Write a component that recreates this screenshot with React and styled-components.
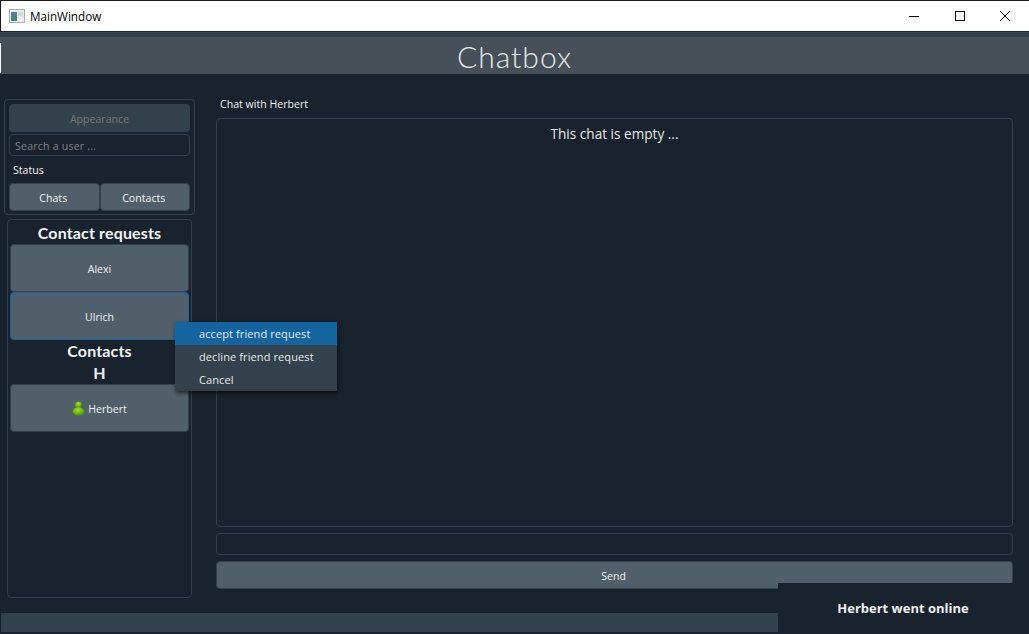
import React from "react";
import styled, { createGlobalStyle } from "styled-components";

const Global = createGlobalStyle`
  html, body { margin: 0; padding: 0; background: #19232d; }
  #root { width: 1029px; height: 634px; overflow: hidden; }
  * { box-sizing: border-box; }
`;

const Window = styled.div`
  position: relative;
  width: 1029px;
  height: 634px;
  display: flex;
  flex-direction: column;
  background: #19232d;
  color: #dfe1e2;
  font-family: "Open Sans", "Noto Sans", sans-serif;
  font-size: 10.6px;
  overflow: hidden;
`;

const TitleBar = styled.div`
  height: 32px;
  flex: none;
  display: flex;
  align-items: center;
  background: #fff;
  border-top: 1px solid #1a1a1a;
  border-left: 1px solid #1a1a1a;
  border-bottom: 1px solid #1a2129;
  color: #000;
  font-size: 11.7px;
  padding-left: 8px;
  padding-right: 1px;
`;

const AppTitle = styled.span`
  margin-left: 5px;
  flex: 1;
`;

const WinButton = styled.div`
  width: 45.5px;
  height: 30px;
  display: flex;
  align-items: center;
  justify-content: center;
`;

const MenuBand = styled.div`
  height: 5px;
  flex: none;
  background: #32414b;
`;

const Header = styled.div`
  position: relative;
  height: 37px;
  flex: none;
  display: flex;
  align-items: center;
  justify-content: center;
  background: #455058;
  font-family: "Lato", sans-serif;
  font-weight: 300;
  font-size: 30px;
  letter-spacing: 1px;
  color: #e8eaeb;
  &::before {
    content: "";
    position: absolute;
    left: 0;
    top: 6px;
    bottom: 1px;
    width: 1px;
    background: #f4f5f5;
  }
`;

const Main = styled.div`
  flex: 1;
  min-height: 0;
  display: flex;
  padding: 25px 16px 15px 4px;
`;

const Sidebar = styled.div`
  width: 191px;
  flex: none;
  display: flex;
  flex-direction: column;
  gap: 4px;
`;

const Frame = styled.div`
  border: 1px solid #32414b;
  border-radius: 4px;
`;

const TopPanel = styled(Frame)`
  height: 116px;
  width: 191px;
  padding: 4px;
  display: flex;
  flex-direction: column;
`;

const BaseButton = styled.div`
  display: flex;
  align-items: center;
  justify-content: center;
  padding-top: 1px;
  background: #505f69;
  border: 1px solid #32414b;
  border-radius: 4px;
  color: #f0f0f0;
`;

const DisabledButton = styled(BaseButton)`
  height: 28px;
  flex: none;
  background: #32414b;
  color: #787878;
`;

const SearchBox = styled(Frame)`
  height: 22px;
  flex: none;
  margin-top: 2px;
  padding: 1px 0 0 5px;
  display: flex;
  align-items: center;
  color: #7d8489;
  letter-spacing: 0.2px;
`;

const Status = styled.div`
  height: 27px;
  flex: none;
  display: flex;
  align-items: center;
  padding-left: 4px;
  color: #f0f0f0;
`;

const TabRow = styled.div`
  display: flex;
  height: 28px;
  flex: none;
`;

const TabButton = styled(BaseButton)`
  flex: 1;
  padding-right: 2px;
`;

const ListPanel = styled(Frame)`
  width: 185px;
  height: 379px;
  margin-left: 3px;
  padding: 3px 2px;
  display: flex;
  flex-direction: column;
  align-items: stretch;
`;

const SectionTitle = styled.div`
  height: ${p => p.$h}px;
  flex: none;
  display: flex;
  align-items: center;
  justify-content: center;
  padding-bottom: ${p => p.$lift}px;
  font-family: "Lato", sans-serif;
  font-weight: 700;
  font-size: 16px;
  letter-spacing: 0.15px;
  color: #f2f3f4;
`;

const ContactButton = styled(BaseButton)`
  height: 48px;
  flex: none;
  gap: 3px;
  border-color: ${p => (p.$focused ? "#1464a0" : "#32414b")};
`;

const ChatColumn = styled.div`
  flex: 1;
  min-width: 0;
  margin-left: 21px;
  display: flex;
  flex-direction: column;
`;

const ChatLabel = styled.div`
  height: 19px;
  flex: none;
  display: flex;
  align-items: center;
  padding: 0 0 9px 4px;
  color: #f0f0f0;
`;

const ChatArea = styled(Frame)`
  height: 409px;
  flex: none;
  padding-top: 5px;
  text-align: center;
  font-size: 13.6px;
  line-height: 20px;
  color: #e6e8e9;
`;

const MessageInput = styled(Frame)`
  height: 22px;
  flex: none;
  margin-top: 6px;
`;

const SendButton = styled(BaseButton)`
  height: 28px;
  flex: none;
  margin-top: 6px;
  padding-right: 2px;
`;

const StatusBar = styled.div`
  height: 19px;
  flex: none;
  margin: 0 0 2px 1px;
  background: #32414b;
`;

const Menu = styled.div`
  position: absolute;
  left: 175px;
  top: 322px;
  width: 162px;
  height: 69px;
  background: #32414b;
  box-shadow: 1px 2px 4px rgba(0, 0, 0, 0.6);
  font-size: 11px;
  letter-spacing: 0.1px;
`;

const MenuItem = styled.div`
  height: 23px;
  display: flex;
  align-items: center;
  padding-left: 24px;
  background: ${p => (p.$active ? "#1464a0" : "transparent")};
  color: #e6e8e9;
`;

const Toast = styled.div`
  position: absolute;
  left: 778px;
  top: 583px;
  width: 251px;
  height: 49px;
  display: flex;
  align-items: center;
  justify-content: center;
  background: #19232d;
  color: #f0f0f0;
  font-family: "Open Sans", sans-serif;
  font-weight: 700;
  font-size: 13px;
  padding-right: 1px;
`;

const AppIcon = () => (
  <svg width="16" height="14" viewBox="0 0 16 14">
    <rect x="0.5" y="0.5" width="15" height="13" fill="#e6e8ea" stroke="#a9aeb2" />
    <rect x="2" y="3" width="6" height="9" fill="#3f8a7c" />
    <rect x="2" y="3" width="6" height="3" fill="#5b7f9e" />
    <rect x="9" y="3" width="5" height="4" fill="#c9ddd6" />
    <rect x="9" y="8" width="5" height="4" fill="#f2f4f4" />
  </svg>
);

const UserIcon = () => (
  <svg width="13" height="15" viewBox="0 0 13 15">
    <defs>
      <radialGradient id="g" cx="0.45" cy="0.35" r="0.7">
        <stop offset="0" stopColor="#a6ea1e" />
        <stop offset="1" stopColor="#3f8205" />
      </radialGradient>
    </defs>
    <circle cx="6.5" cy="3.8" r="3.4" fill="url(#g)" />
    <ellipse cx="6.5" cy="10.5" rx="6" ry="4.3" fill="url(#g)" />
  </svg>
);

export default function App() {
  return (
    <Window>
      <Global />
      <TitleBar>
        <AppIcon />
        <AppTitle>MainWindow</AppTitle>
        <WinButton>
          <svg width="10" height="10" viewBox="0 0 10 10"><path d="M0 5.5H10" stroke="#000" /></svg>
        </WinButton>
        <WinButton>
          <svg width="10" height="10" viewBox="0 0 10 10"><rect x="0.5" y="0.5" width="9" height="9" fill="none" stroke="#000" /></svg>
        </WinButton>
        <WinButton>
          <svg width="10" height="10" viewBox="0 0 10 10"><path d="M0 0L10 10M10 0L0 10" stroke="#000" /></svg>
        </WinButton>
      </TitleBar>
      <MenuBand />
      <Header>Chatbox</Header>
      <Main>
        <Sidebar>
          <TopPanel>
            <DisabledButton>Appearance</DisabledButton>
            <SearchBox>Search a user ...</SearchBox>
            <Status>Status</Status>
            <TabRow>
              <TabButton>Chats</TabButton>
              <TabButton>Contacts</TabButton>
            </TabRow>
          </TopPanel>
          <ListPanel>
            <SectionTitle $h={21} $lift={3}>Contact requests</SectionTitle>
            <ContactButton>Alexi</ContactButton>
            <ContactButton $focused>Ulrich</ContactButton>
            <SectionTitle $h={22} $lift={1}>Contacts</SectionTitle>
            <SectionTitle $h={22} $lift={1}>H</SectionTitle>
            <ContactButton><UserIcon />Herbert</ContactButton>
          </ListPanel>
        </Sidebar>
        <ChatColumn>
          <ChatLabel>Chat with Herbert</ChatLabel>
          <ChatArea>This chat is empty ...</ChatArea>
          <MessageInput />
          <SendButton>Send</SendButton>
        </ChatColumn>
      </Main>
      <StatusBar />
      <Menu>
        <MenuItem $active>accept friend request</MenuItem>
        <MenuItem>decline friend request</MenuItem>
        <MenuItem>Cancel</MenuItem>
      </Menu>
      <Toast>Herbert went online</Toast>
    </Window>
  );
}
